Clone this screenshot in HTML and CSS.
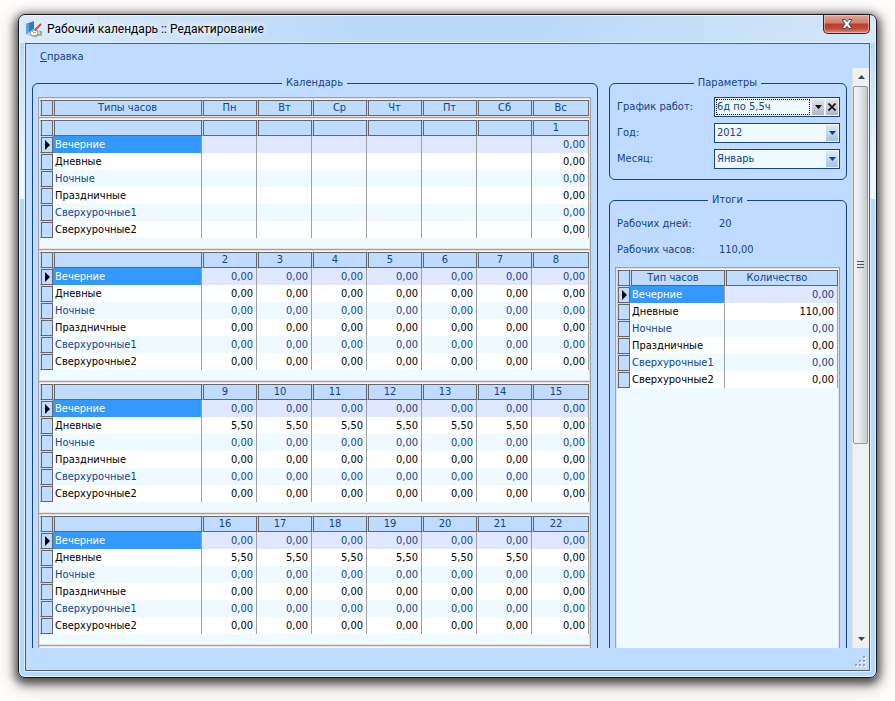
FILE: index.html
```
<!DOCTYPE html>
<html lang="ru">
<head>
    <meta charset="UTF-8">
    <meta name="viewport" content="width=device-width, initial-scale=1.0">
    <title>Рабочий календарь :: Редактирование</title>
    <link rel="stylesheet" href="styles.css">
</head>
<body>
    <div class="window">
        <header class="titlebar">
            <svg class="app-icon" width="17" height="17" viewBox="0 0 17 17">
                <path d="M0 3 L8 0 V9 L0 13 Z" fill="#2f7fbf"/>
                <path d="M0 3 L3 2 V12 L0 13 Z" fill="#5aa5d8"/>
                <path d="M1 13 L7 8 L16 11 L10 16 Z" fill="#dfe5e6" stroke="#7d93a3" stroke-width=".6"/>
                <ellipse cx="8" cy="12" rx="4" ry="3" fill="#fffdf0" stroke="#5f7f98" stroke-width=".8"/>
                <path d="M8 12 L6 10 M8 12 L10 11" stroke="#c59a28"/>
                <path d="M9 9 L15 3" stroke="#e0463c" stroke-width="2"/>
                <path d="M11 14 H15 V10" fill="none" stroke="#a19c74" stroke-width="1.500"/>
            </svg>
            <h1 class="title">Рабочий календарь :: Редактирование</h1>
            <button type="button" class="close" aria-label="Закрыть">
                <svg width="12" height="10" viewBox="0 0 12 10">
                    <path d="M1 .5 H4.2 L6 2.8 L7.800 .5 H11 L7.900 5 L11 9.500 H7.800 L6 7.200 L4.200 9.500 H1 L4.100 5 Z" fill="#fff" stroke="#4c4f63"/>
                </svg>
            </button>
        </header>

        <div class="client">
            <nav class="menu">
                <a href="#help"><u>С</u>правка</a>
            </nav>

            <div class="workspace">
                <main class="panels">
                    <fieldset class="group calendar">
                        <legend>Календарь</legend>
                        <div class="grid">
                            <table>
                                <colgroup><col class="col-mark"><col><col class="col-day" span="6"><col class="col-last"></colgroup>
                                <thead>
                                    <tr><th></th><th>Типы часов</th><th>Пн</th><th>Вт</th><th>Ср</th><th>Чт</th><th>Пт</th><th>Сб</th><th>Вс</th></tr>
                                </thead>
                            </table>
                        </div>
                        <div id="weeks"></div>
                        <div class="grid week"></div>
                    </fieldset>

                    <div class="side">
                        <fieldset class="group params">
                            <legend>Параметры</legend>
                            <div class="field">
                                <label for="schedule">График работ:</label>
                                <div class="combo active">
                                    <select id="schedule"><option>6д по 5,5ч</option></select>
                                    <span class="drop"><svg width="7" height="4" viewBox="0 0 7 4"><path d="M0 0 H7 L3.500 4 Z"/></svg></span>
                                    <button type="button" class="clear" aria-label="Очистить"><svg width="8" height="8" viewBox="0 0 8 8"><path d="M.5 .5 L7.500 7.500 M7.500 .5 L.5 7.500" stroke="#000" stroke-width="1.600"/></svg></button>
                                </div>
                            </div>
                            <div class="field">
                                <label for="year">Год:</label>
                                <div class="combo">
                                    <select id="year"><option>2012</option></select>
                                    <span class="drop"><svg width="7" height="4" viewBox="0 0 7 4"><path d="M0 0 H7 L3.500 4 Z"/></svg></span>
                                </div>
                            </div>
                            <div class="field">
                                <label for="month">Месяц:</label>
                                <div class="combo">
                                    <select id="month"><option>Январь</option></select>
                                    <span class="drop"><svg width="7" height="4" viewBox="0 0 7 4"><path d="M0 0 H7 L3.500 4 Z"/></svg></span>
                                </div>
                            </div>
                        </fieldset>

                        <fieldset class="group totals">
                            <legend>Итоги</legend>
                            <dl class="summary">
                                <dt>Рабочих дней:</dt><dd>20</dd>
                                <dt>Рабочих часов:</dt><dd>110,00</dd>
                            </dl>
                            <div class="grid">
                                <table>
                                    <colgroup><col class="col-mark"><col><col class="col-total"></colgroup>
                                    <thead>
                                        <tr><th></th><th class="shift">Тип часов</th><th class="shift">Количество</th></tr>
                                    </thead>
                                    <tbody>
                                        <tr class="current"><td class="mark"></td><td class="name">Вечерние</td><td>0,00</td></tr>
                                        <tr><td class="mark"></td><td class="name">Дневные</td><td>110,00</td></tr>
                                        <tr><td class="mark"></td><td class="name">Ночные</td><td>0,00</td></tr>
                                        <tr><td class="mark"></td><td class="name">Праздничные</td><td>0,00</td></tr>
                                        <tr><td class="mark"></td><td class="name">Сверхурочные1</td><td>0,00</td></tr>
                                        <tr><td class="mark"></td><td class="name">Сверхурочные2</td><td>0,00</td></tr>
                                    </tbody>
                                </table>
                            </div>
                        </fieldset>
                    </div>
                </main>

                <div class="scrollbar">
                    <span class="arrow"><svg width="7" height="4" viewBox="0 0 7 4"><path d="M0 4 H7 L3.500 0 Z" fill="#444"/></svg></span>
                    <div class="thumb"><i></i><i></i><i></i></div>
                    <span class="track"></span>
                    <span class="arrow"><svg width="7" height="4" viewBox="0 0 7 4"><path d="M0 0 H7 L3.500 4 Z" fill="#444"/></svg></span>
                </div>
            </div>

            <footer class="status">
                <svg width="12" height="12" viewBox="0 0 12 12">
                    <path d="M9 1h2v2h-2z M5 5h2v2h-2z M9 5h2v2h-2z M1 9h2v2h-2z M5 9h2v2h-2z M9 9h2v2h-2z" fill="#fff"/>
                    <path d="M8 0h2v2h-2z M4 4h2v2h-2z M8 4h2v2h-2z M0 8h2v2h-2z M4 8h2v2h-2z M8 8h2v2h-2z" fill="#a39f98"/>
                </svg>
            </footer>
        </div>
    </div>

    <script>
        const types = ['Вечерние', 'Дневные', 'Ночные', 'Праздничные', 'Сверхурочные1', 'Сверхурочные2'];

        // first: date of the Monday (below 1 = previous month), day: daytime hours Mon-Sat
        const weeks = [
            { first: -5, day: '0,00' },
            { first: 2, day: '0,00' },
            { first: 9, day: '5,50' },
            { first: 16, day: '5,50' }
        ];

        function renderWeek(week) {
            let head = '<th></th><th></th>';
            for (let i = 0; i < 7; i++) {
                const date = week.first + i;
                head += `<th class="shift">${date > 0 ? date : ''}</th>`;
            }

            let rows = '';
            types.forEach((type, n) => {
                rows += `<tr${n === 0 ? ' class="current"' : ''}><td class="mark"></td><td class="name">${type}</td>`;
                for (let i = 0; i < 7; i++) {
                    const hours = type === 'Дневные' && i < 6 ? week.day : '0,00';
                    rows += `<td>${week.first + i > 0 ? hours : ''}</td>`;
                }
                rows += '</tr>';
            });

            return `<div class="grid week"><table>
                <colgroup><col class="col-mark"><col><col class="col-day" span="6"><col class="col-last"></colgroup>
                <thead><tr>${head}</tr></thead>
                <tbody>${rows}</tbody>
            </table></div>`;
        }

        document.getElementById('weeks').innerHTML = weeks.map(renderWeek).join('');
    </script>
</body>
</html>
```

FILE: styles.css
```
* {
    box-sizing: border-box;
}

body {
    margin: 0;
    padding: 14px 18px 23px;
    height: 100vh;
    background: #fffcfb;
    color: #15428b;
    font: 11px/14px "DejaVu Sans Condensed", "DejaVu Sans", sans-serif;
}

.window {
    display: flex;
    flex-direction: column;
    height: 100%;
    padding: 0 6px 6px;
    border: 1px solid #15181c;
    border-radius: 7px;
    background:
        linear-gradient(100deg, rgba(255, 255, 255, 0.5), transparent 40%, transparent 60%, rgba(255, 255, 255, 0.4)) 0 0 / 100% 28px no-repeat,
        linear-gradient(#b9d7f7, #b9d9f9 28px, #eef8fe 150px, #eef8fe 184px, #b5d8fb 184px);
    box-shadow: inset 0 0 0 1px #e4f6ff, 0 3px 9px 3px rgba(0, 0, 0, 0.6), 0 5px 18px 3px rgba(0, 0, 0, 0.25);
}

.titlebar {
    display: flex;
    align-items: center;
    flex: none;
    height: 28px;
    padding-left: 1px;
    gap: 4px;
}

.title {
    flex: 1;
    margin: 0;
    color: #000;
    font: 12px/16px Roboto, "Noto Sans", sans-serif;
    text-shadow: 0 0 6px #fff, 0 0 10px #fff;
}

.close {
    display: flex;
    align-items: center;
    justify-content: center;
    align-self: flex-start;
    width: 47px;
    height: 19px;
    padding: 0;
    border: 1px solid #4b1a1c;
    border-top: none;
    border-radius: 0 0 5px 5px;
    background: linear-gradient(#e3a497, #d07d6c 45%, #b8402c 50%, #c24a34 75%, #dd8f74);
    box-shadow: inset 0 0 0 1px rgba(255, 220, 210, 0.5);
}

.client {
    display: flex;
    flex: 1;
    flex-direction: column;
    min-height: 0;
    border: 1px solid #51606f;
    background: #bfdbff;
    box-shadow: 0 0 0 1px #e0f1fe;
}

.menu {
    flex: none;
    height: 24px;
    padding: 6px 14px;
}

.menu a {
    color: #15428b;
    text-decoration: none;
}

.workspace {
    display: flex;
    flex: 1;
    min-height: 0;
    overflow: hidden;
}

.panels {
    display: flex;
    flex: 1;
    align-self: flex-start;
    gap: 11px;
    min-width: 0;
    padding: 8px 5px 8px 6px;
}

.group {
    min-width: 0;
    margin: 0;
    padding: 7px 6px 10px 5px;
    border: 1px solid #15428b;
    border-radius: 6px;
}

.group legend {
    margin: 0 auto;
    padding: 0 4px;
}

.calendar {
    flex: 1;
}

.side {
    display: flex;
    flex: none;
    flex-direction: column;
    gap: 13px;
    width: 238px;
}

/* grids */
.grid {
    padding: 2px 1px 1px;
    border: 1px solid #a0a0a0;
    border-bottom: none;
    background: #eefaff;
    box-shadow: inset 0 0 0 1px #e3e3e3;
}

.week {
    height: 132px;
}

.grid table {
    width: 100%;
    border-spacing: 0;
    table-layout: fixed;
}

.col-mark {
    width: 13px;
}

.col-day {
    width: 55px;
}

.col-last {
    width: 57px;
}

.col-total {
    width: 113px;
}

.grid th {
    height: 16px;
    padding: 0;
    border: 1px solid #666;
    border-left-color: #bfdbff;
    background: #bfdbff;
    box-shadow: inset 1px 0 #666;
    font-weight: normal;
    line-height: 14px;
}

.grid .shift {
    padding-right: 9px;
}

.grid td {
    height: 17px;
    padding: 0 3px 0 0;
    border-right: 1px solid #a0a0a0;
    background: #fff;
    color: #000;
    line-height: 16px;
    text-align: right;
    white-space: nowrap;
}

.grid tr:nth-child(odd) td {
    background: #eefaff;
    color: #15428b;
}

.grid tr.current td {
    background: #dfe8ff;
}

.grid td.name {
    padding: 0 0 0 2px;
    text-align: left;
}

.grid tr.current td.name {
    background: #3399ff;
    color: #fff;
}

.grid tr td.mark,
.grid tr:nth-child(odd) td.mark {
    padding: 0;
    border: 1px solid #666;
    border-top-color: #bfdbff;
    border-left-color: #bfdbff;
    background: #bfdbff;
    box-shadow: inset 1px 1px #666;
}

.current .mark::before {
    content: "";
    display: block;
    width: 0;
    margin-left: 4px;
    border: 5px solid transparent;
    border-left: 5px solid #000;
    border-right: none;
}

/* parameters */
.params {
    display: flex;
    flex-direction: column;
    gap: 6px;
}

.field {
    display: flex;
    align-items: center;
    justify-content: space-between;
    padding-left: 2px;
}

.combo {
    display: flex;
    align-items: center;
    position: relative;
    width: 126px;
    height: 20px;
    padding: 1px;
    border: 1px solid #15428b;
    background: #eefaff;
}

.combo select {
    flex: 1;
    width: 100%;
    height: 16px;
    padding: 0 0 0 1px;
    border: none;
    outline: none;
    appearance: none;
    background: none;
    color: #15428b;
    font: inherit;
}

.combo .drop {
    display: flex;
    align-items: center;
    justify-content: center;
    position: absolute;
    top: 1px;
    right: 1px;
    width: 12px;
    height: 16px;
    background: linear-gradient(#dceaf8, #a5c4e2);
    fill: #15428b;
    pointer-events: none;
}

.combo.active {
    gap: 2px;
}

.active select {
    padding: 0;
    border: 1px dotted #000;
}

.active .drop,
.clear {
    display: flex;
    align-items: center;
    justify-content: center;
    flex: none;
    width: 12px;
    height: 16px;
    padding: 0;
    border: none;
    background: linear-gradient(#e4e4ee, #b4b4ca);
    fill: #000;
}

.combo.active .drop {
    position: static;
    background: linear-gradient(#e4e4ee, #b4b4ca);
    fill: #000;
}

/* totals */
.totals {
    display: flex;
    flex: 1;
    flex-direction: column;
    padding-top: 4px;
}

.totals .grid {
    flex: 1;
}

.summary {
    display: grid;
    grid-template-columns: 102px 1fr;
    margin: 0 0 4px;
    padding-left: 2px;
    line-height: 26px;
}

.summary dd {
    margin: 0;
}

/* scrollbar */
.scrollbar {
    display: flex;
    flex: none;
    flex-direction: column;
    width: 17px;
    border-left: 1px solid #e3e3e3;
    background: #f0f0f0;
}

.scrollbar .arrow {
    display: flex;
    align-items: center;
    justify-content: center;
    height: 18px;
}

.scrollbar .thumb {
    display: flex;
    flex: 357;
    flex-direction: column;
    align-items: center;
    justify-content: center;
    gap: 2px;
    width: 15px;
    border: 1px solid #979797;
    border-radius: 2px;
    background: linear-gradient(to right, #f5f5f5, #e6e6e8 50%, #c6c7ca);
}

.thumb i {
    width: 7px;
    height: 1px;
    background: #555;
}

.scrollbar .track {
    flex: 187;
}

.status {
    display: flex;
    flex: none;
    align-items: flex-end;
    justify-content: flex-end;
    height: 22px;
    padding: 2px;
}
```
